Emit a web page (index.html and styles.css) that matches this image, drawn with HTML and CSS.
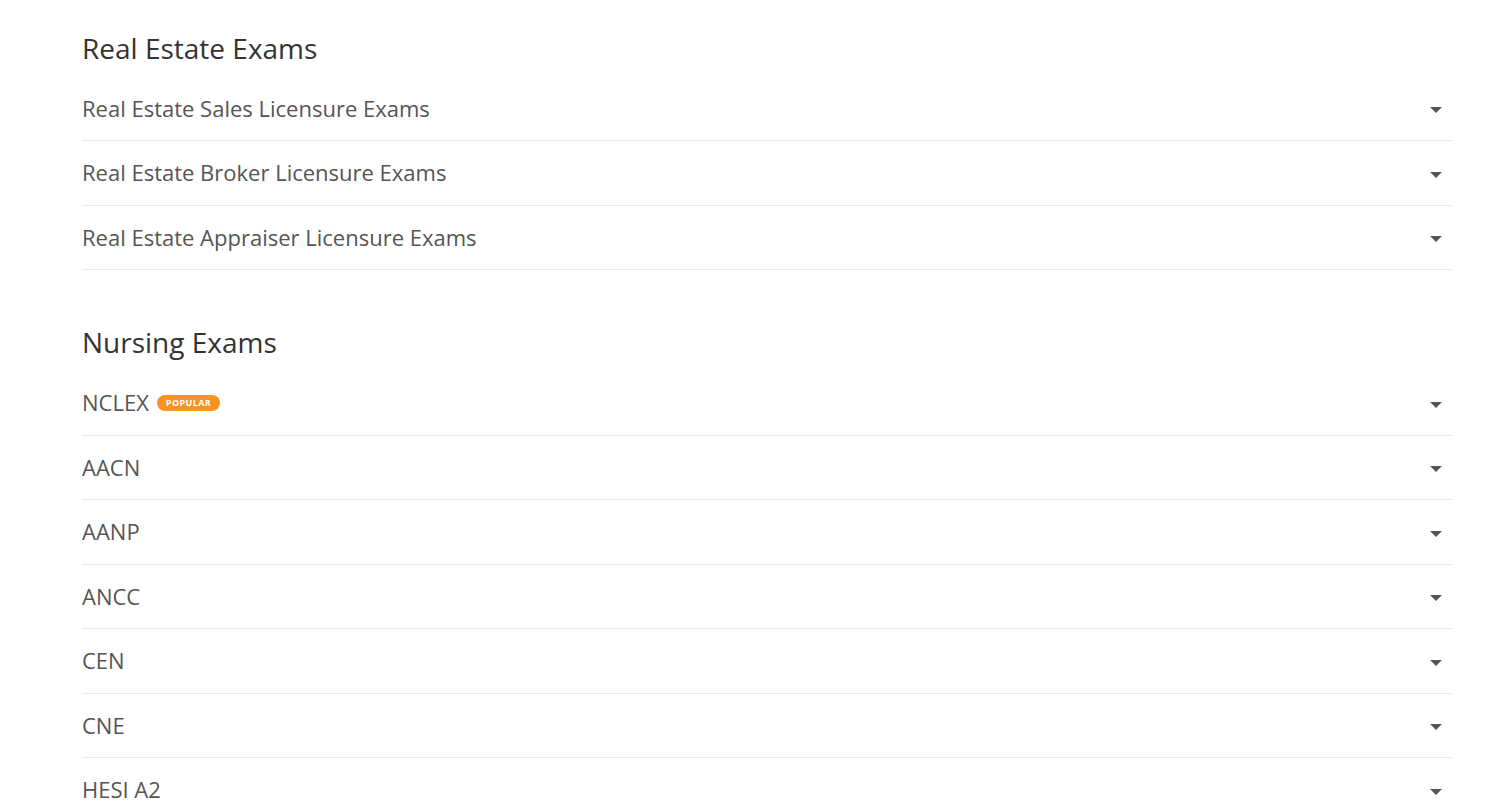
FILE: index.html
```html
<!DOCTYPE html>
<html>
<head>
<meta charset="utf-8">
<link rel="stylesheet" href="styles.css">
</head>
<body>
<main class="page">
  <section class="group">
    <h2 class="group-title">Real Estate Exams</h2>
    <ul class="list">
      <li class="row"><span class="label">Real Estate Sales Licensure Exams</span><span class="caret"></span></li>
      <li class="row"><span class="label">Real Estate Broker Licensure Exams</span><span class="caret"></span></li>
      <li class="row"><span class="label">Real Estate Appraiser Licensure Exams</span><span class="caret"></span></li>
    </ul>
  </section>
  <section class="group">
    <h2 class="group-title">Nursing Exams</h2>
    <ul class="list">
      <li class="row"><span class="label">NCLEX <span class="badge">POPULAR</span></span><span class="caret"></span></li>
      <li class="row"><span class="label">AACN</span><span class="caret"></span></li>
      <li class="row"><span class="label">AANP</span><span class="caret"></span></li>
      <li class="row"><span class="label">ANCC</span><span class="caret"></span></li>
      <li class="row"><span class="label">CEN</span><span class="caret"></span></li>
      <li class="row"><span class="label">CNE</span><span class="caret"></span></li>
      <li class="row"><span class="label">HESI A2</span><span class="caret"></span></li>
    </ul>
  </section>
</main>
</body>
</html>
```

FILE: styles.css
```css
html, body {
  margin: 0;
  padding: 0;
  background: #fff;
}
body {
  font-family: "Open Sans", "Liberation Sans", sans-serif;
}
.page {
  padding: 29.5px 45px 0 82px;
  display: flex;
  flex-direction: column;
  gap: 54px;
}
.group-title {
  margin: 0 0 11px;
  font-size: 28px;
  line-height: 36px;
  font-weight: 400;
  color: #333;
}
.list {
  list-style: none;
  margin: 0;
  padding: 0;
}
.row {
  display: flex;
  align-items: center;
  justify-content: space-between;
  padding: 20px 0;
  line-height: 23.5px;
  border-bottom: 1px solid #e8e8e8;
}
.label {
  font-size: 22px;
  color: #555;
  display: flex;
  align-items: center;
  gap: 8px;
}
.badge {
  display: inline-block;
  background: #f7931e;
  color: #fff;
  font-size: 9px;
  font-weight: 700;
  letter-spacing: 0.4px;
  line-height: 16px;
  padding: 0 9px;
  border-radius: 8px;
}
.caret {
  width: 0;
  height: 0;
  margin-top: 4px;
  margin-right: 10px;
  border-left: 6px solid transparent;
  border-right: 6px solid transparent;
  border-top: 6px solid #555;
}
```
